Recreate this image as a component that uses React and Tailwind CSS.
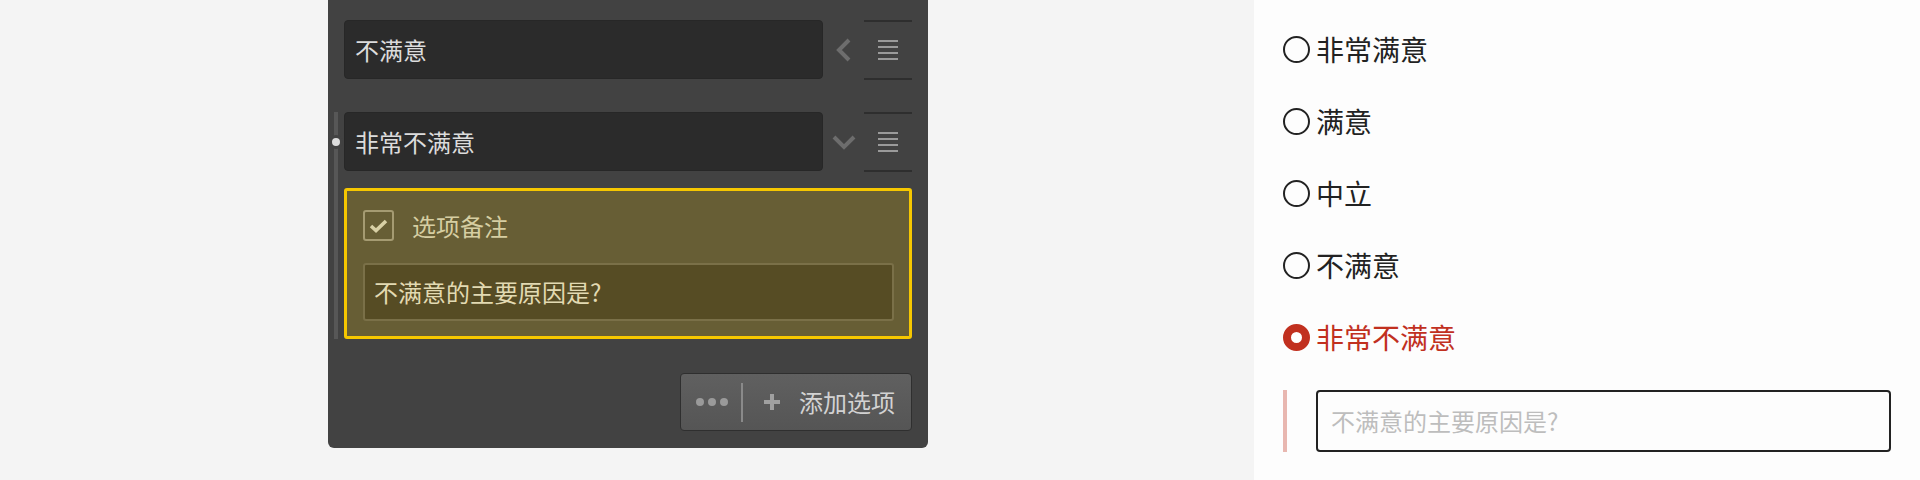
import React from 'react';

const options = ['非常满意', '满意', '中立', '不满意', '非常不满意'];
const cjk = { fontFamily: '"Noto Sans CJK SC", "Noto Sans", sans-serif' };

function MenuHandle() {
  return (
    <div className="w-[48px] h-[60px] border-y-2 border-[#2e2e2e] flex flex-col items-center justify-center gap-[4px]">
      <span className="block w-[20px] h-[2px] bg-[#9a9a9a]" />
      <span className="block w-[20px] h-[2px] bg-[#9a9a9a]" />
      <span className="block w-[20px] h-[2px] bg-[#9a9a9a]" />
      <span className="block w-[20px] h-[2px] bg-[#9a9a9a]" />
    </div>
  );
}

function OptionInput({ value, expanded }) {
  return (
    <div className="flex h-[60px]">
      <div className="w-[479px] h-[59px] bg-[#2b2b2b] border border-[#272727] rounded-[4px] flex items-center pl-[10px] text-[24px] text-[#dcdcdc]">
        {value}
      </div>
      <div className="w-[41px] flex items-center justify-center">
        {expanded ? (
          <svg width="24" height="16" viewBox="0 0 24 16">
            <path d="M2 3 L12 13 L22 3" fill="none" stroke="#6d6d6d" strokeWidth="4" />
          </svg>
        ) : (
          <svg width="16" height="24" viewBox="0 0 16 24">
            <path d="M13 2 L3 12 L13 22" fill="none" stroke="#6d6d6d" strokeWidth="4" />
          </svg>
        )}
      </div>
      <MenuHandle />
    </div>
  );
}

export default function App() {
  return (
    <div className="w-[1920px] h-[480px] bg-[#f4f4f4] flex overflow-hidden" style={cjk}>
      <div className="w-[328px]" />

      {/* Editor panel */}
      <div className="w-[600px] h-[448px] bg-[#424242] rounded-b-[6px] flex flex-col pt-[20px] pr-[16px]">
        <div className="ml-[16px]">
          <OptionInput value="不满意" />
        </div>

        <div className="flex mt-[32px]">
          <div className="w-[16px] relative">
            <div className="ml-[6px] w-[4px] h-full bg-[#575757]" />
            <div className="absolute left-[1px] top-[23px] w-[14px] h-[14px] rounded-full bg-[#dddddd] border-[3px] border-[#424242]" />
          </div>
          <div className="flex-1 flex flex-col">
            <OptionInput value="非常不满意" expanded />
            <div className="mt-[16px] h-[151px] bg-[#675e35] border-[3px] border-[#f6c700] rounded-[3px] pt-[19px] pl-[16px] pr-[15px]">
              <div className="flex items-center h-[31px]">
                <div className="w-[31px] h-[31px] border-2 border-[#a59b72] rounded-[3px] flex items-center justify-center">
                  <svg width="19" height="14" viewBox="0 0 19 14">
                    <path d="M2 7 L7 11.5 L17 2" fill="none" stroke="#d8d0a5" strokeWidth="3.6" />
                  </svg>
                </div>
                <span className="ml-[18px] text-[24px] leading-none text-[#d6cea2]">选项备注</span>
              </div>
              <div className="mt-[22px] h-[58px] bg-[#564c24] border-2 border-[#7a7048] rounded-[3px] flex items-center pl-[9px] text-[24px] text-[#e2dab2]">
                不满意的主要原因是?
              </div>
            </div>
          </div>
        </div>

        <div className="mt-[34px] self-end w-[232px] h-[58px] rounded-[4px] border border-[#2f2f2f] bg-gradient-to-b from-[#606060] to-[#555555] flex items-center pl-[15px]">
          <div className="flex gap-[4px]">
            <span className="w-[8px] h-[8px] rounded-full bg-[#9a9a9a]" />
            <span className="w-[8px] h-[8px] rounded-full bg-[#9a9a9a]" />
            <span className="w-[8px] h-[8px] rounded-full bg-[#9a9a9a]" />
          </div>
          <div className="ml-[13px] w-[2px] h-[39px] bg-[#8a8a8a]" />
          <svg className="ml-[21px]" width="16" height="16" viewBox="0 0 16 16">
            <path d="M8 0 V16 M0 8 H16" stroke="#a0a0a0" strokeWidth="4" />
          </svg>
          <span className="ml-[19px] text-[24px] text-[#d2d2d2]">添加选项</span>
        </div>
      </div>

      <div className="w-[326px]" />

      {/* Preview */}
      <div className="flex-1 h-full bg-[#fdfdfd] pl-[29px] pr-[29px] pt-[13px]">
        {options.map((o, i) => {
          const selected = i === options.length - 1;
          return (
            <div key={o} className="h-[72px] flex items-center gap-[6px]">
              {selected ? (
                <span className="w-[27px] h-[27px] rounded-full border-[8px] border-[#c1301f] bg-white" />
              ) : (
                <span className="w-[27px] h-[27px] rounded-full border-2 border-[#222222]" />
              )}
              <span className={`text-[28px] ${selected ? 'text-[#c1301f]' : 'text-[#222222]'}`}>{o}</span>
            </div>
          );
        })}
        <div className="mt-[17px] flex">
          <div className="w-[4px] h-[62px] bg-[#e8b7b0]" />
          <div className="ml-[29px] flex-1 h-[62px] border-2 border-[#222222] rounded-[4px] flex items-center pl-[13px] text-[24px] text-[#bdbdbd]">
            不满意的主要原因是?
          </div>
        </div>
      </div>
    </div>
  );
}
